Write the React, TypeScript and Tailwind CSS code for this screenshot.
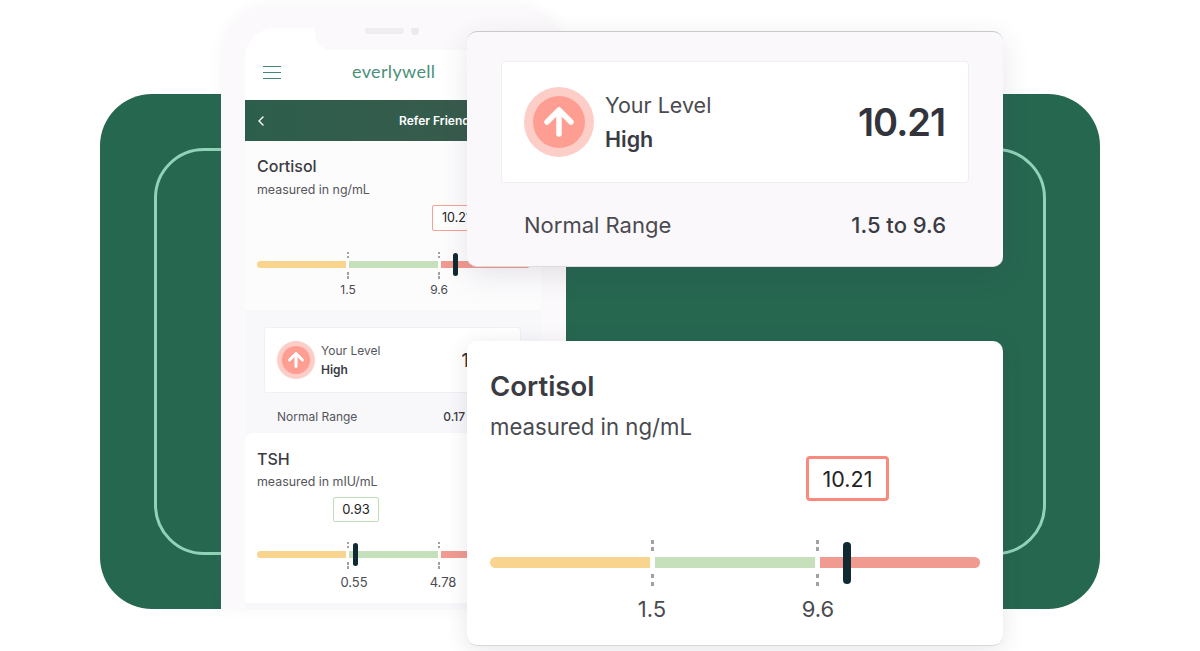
const font = { fontFamily: "Inter, 'Noto Sans', sans-serif" };

const dotsBig = "h-[4px] w-[3px] bg-[#a0a0a5]";
const dotsSmall = "h-[2.5px] w-[2px] bg-[#a0a0a5]";

const Ticks = ({ x, big }: { x: number; big?: boolean }) => {
  const dot = big ? dotsBig : dotsSmall;
  return (
    <>
      <div
        className={big ? "absolute bottom-[17px] flex flex-col gap-[3px]" : "absolute bottom-[10px] flex flex-col gap-[1.5px]"}
        style={{ left: x }}
      >
        <div className={dot} />
        <div className={dot} />
      </div>
      <div
        className={big ? "absolute top-[17px] flex flex-col gap-[4px]" : "absolute top-[11px] flex flex-col gap-[1.5px]"}
        style={{ left: x }}
      >
        <div className={dot} />
        <div className={dot} />
      </div>
    </>
  );
};

type ScaleProps = {
  big?: boolean;
  marker: number;
  low: string;
  high: string;
  lowX: number;
  highX: number;
  labelClass?: string;
};

// three coloured segments with dashed ticks, a marker and two labels
const Scale = ({ big, marker, low, high, lowX, highX, labelClass }: ScaleProps) => {
  const seg = big ? "w-[160px]" : "w-[89px]";
  const label = big
    ? "absolute top-[38px] -translate-x-1/2 text-[22px] leading-[28px] text-[#4a4a50]"
    : labelClass ?? "absolute top-[21px] -translate-x-1/2 text-[12px] leading-[16px] text-[#4a4a50]";
  return (
    <div className={big ? "relative flex gap-[5px] h-[11px]" : "relative flex gap-[3px] h-[7px]"}>
      <div className={`${seg} rounded-l-full bg-[#f8d48e]`} />
      <div className={`${seg} bg-[#c5e0bb]`} />
      <div className={`${seg} rounded-r-full bg-[#f09a90]`} />
      <Ticks x={big ? 161 : 90} big={big} />
      <Ticks x={big ? 326 : 181} big={big} />
      <div
        className={
          big
            ? "absolute top-[-15px] h-[42px] w-[8px] rounded-full bg-[#0f2a33]"
            : "absolute top-[-8px] h-[23px] w-[5px] rounded-full bg-[#0f2a33]"
        }
        style={{ left: marker }}
      />
      <span className={label} style={{ left: lowX }}>
        {low}
      </span>
      <span className={label} style={{ left: highX }}>
        {high}
      </span>
    </div>
  );
};

const UpBadge = ({ size }: { size: number }) => (
  <svg width={size} height={size} viewBox="0 0 70 70" className="shrink-0">
    <circle cx="35" cy="35" r="35" fill="#fdcdc8" />
    <circle cx="35" cy="35" r="26" fill="#fe9e93" />
    <path
      d="M35 47V24M23 35l12-12 12 12"
      fill="none"
      stroke="#fff"
      strokeWidth="5.5"
      strokeLinecap="round"
      strokeLinejoin="round"
    />
  </svg>
);

export default function App() {
  return (
    <div className="relative h-[651px] w-[1200px] overflow-hidden bg-white" style={font}>
      {/* green panel with ring */}
      <div className="ml-[100px] mt-[94px] h-[515px] w-[1000px] rounded-[52px] bg-[#266750] pl-[54px] pt-[54px]">
        <div className="h-[407px] w-[892px] rounded-[50px] border-[3px] border-[#8fd3b8]" />
      </div>

      {/* phone */}
      <div className="absolute left-[221px] top-[5px] h-[604px] w-[345px] rounded-t-[52px] bg-[#fbf9fb] pl-[24px] pr-[25px] pt-[23px] shadow-[0_0_14px_rgba(120,110,130,0.06)]">
        <div className="relative h-[581px] w-[296px] overflow-hidden rounded-t-[30px] bg-[#f8f7fa]">
          {/* notch */}
          <div className="absolute left-[70px] top-0 h-[22px] w-[226px] rounded-bl-[16px] bg-[#fbf9fb]" />
          <div className="absolute left-[120px] top-[0px] h-[6px] w-[39px] rounded-full bg-[#efedf0]" />
          <div className="absolute left-[166px] top-[-1px] h-[8px] w-[8px] rounded-full bg-[#eceaed]" />

          <div className="flex h-[72px] items-end bg-white pb-[13px] pl-[18px]">
            <div className="flex w-[18px] flex-col gap-[4.5px] pb-[8px]">
              <div className="h-[1.5px] bg-[#3f8a70]" />
              <div className="h-[1.5px] bg-[#3f8a70]" />
              <div className="h-[1.5px] bg-[#3f8a70]" />
            </div>
            <span
              className="mb-[3px] ml-[71px] text-[18px] leading-[26px] tracking-[0.35px] text-[#4a9079]"
              style={{ fontFamily: "Lato, sans-serif" }}
            >
              everlywell
            </span>
          </div>

          <div className="flex h-[41px] items-center bg-gradient-to-r from-[#2d5e4c] to-[#3a5a4c] pl-[13px]">
            <svg width="6" height="10" viewBox="0 0 6 10">
              <path d="M5 1L1 5l4 4" fill="none" stroke="#fff" strokeWidth="1.4" strokeLinecap="round" />
            </svg>
            <span className="ml-[135px] whitespace-nowrap text-[12px] font-semibold text-white">Refer Friend</span>
          </div>

          <div className="h-[169px] bg-[#fdfcfd] pl-[12px] pt-[15px]">
            <div className="text-[16px] font-medium leading-[20px] text-[#3b3b43]">Cortisol</div>
            <div className="mt-[5px] text-[12.4px] leading-[18px] text-[#55555b]">measured in ng/mL</div>
            <div className="ml-[175px] mt-[6px] flex h-[26px] w-[60px] items-center rounded-[2px] border-[1.5px] border-[#f9a095] bg-white pl-[9px] text-[12.5px] text-[#222]">
              10.21
            </div>
            <div className="mt-[30px]">
              <Scale marker={196} low="1.5" high="9.6" lowX={91} highX={182} />
            </div>
          </div>

          <div className="h-[123px] pl-[19px] pt-[17px]">
            <div className="flex h-[66px] w-[257px] items-center rounded-[3px] border border-[#f1eff3] bg-white pl-[12px]">
              <UpBadge size={38} />
              <div className="ml-[6px] flex flex-col gap-[3px] text-[12px] leading-[16px]">
                <span className="text-[#55555b]">Your Level</span>
                <span className="font-semibold text-[#3b3b43]">High</span>
              </div>
              <span className="ml-[81px] text-[18px] font-medium text-[#33333b]">1</span>
            </div>
            <div className="mt-[16px] flex pl-[13px] text-[12px] leading-[16px]">
              <span className="text-[#55555b]">Normal Range</span>
              <span className="ml-[86px] font-medium text-[#3b3b43]">0.17</span>
            </div>
          </div>

          <div className="h-[170px] rounded-tl-[8px] bg-white pl-[12px] pt-[16px]">
            <div className="text-[16px] font-medium leading-[20px] text-[#3b3b43]">TSH</div>
            <div className="mt-[4px] text-[12.4px] leading-[18px] text-[#55555b]">measured in mIU/mL</div>
            <div className="ml-[76px] mt-[6px] flex h-[25px] w-[46px] items-center justify-center rounded-[2px] border-[1.5px] border-[#bfe0b5] bg-white text-[13px] text-[#222]">
              0.93
            </div>
            <div className="mt-[29px]">
              <Scale
                marker={96}
                low="0.55"
                high="4.78"
                lowX={97}
                highX={186}
                labelClass="absolute top-[23px] -translate-x-1/2 text-[13px] leading-[16px] text-[#4a4a50]"
              />
            </div>
          </div>
        </div>
      </div>

      {/* level card */}
      <div className="absolute left-[467px] top-[31px] h-[236px] w-[536px] rounded-[10px] border-y border-t-[#c9c9cc] border-b-[#dcdcdf] bg-[#faf8fb] pl-[34px] pt-[29px] shadow-[0_8px_28px_rgba(60,50,70,0.12)]">
        <div className="flex h-[122px] w-[468px] items-center rounded-[4px] border border-[#f0eef2] bg-white pl-[22px]">
          <UpBadge size={70} />
          <div className="ml-[11px] flex flex-col gap-[6px] text-[21.5px] leading-[28px]">
            <span className="text-[#4a4a50]">Your Level</span>
            <span className="font-semibold text-[#3b3b43]">High</span>
          </div>
          <span className="ml-auto mr-[23px] text-[38px] font-semibold tracking-[-1px] text-[#33333b]">10.21</span>
        </div>
        <div className="mt-[28px] flex w-[445px] justify-between pl-[23px] text-[22px] leading-[28px]">
          <span className="text-[#4a4a50]">Normal Range</span>
          <span className="font-medium text-[#3b3b43]">1.5 to 9.6</span>
        </div>
      </div>

      {/* cortisol card */}
      <div className="absolute left-[467px] top-[341px] h-[305px] w-[536px] rounded-[10px] border-b border-[#d8d8da] bg-white pl-[23px] pt-[27px] shadow-[0_4px_22px_rgba(60,50,70,0.12)]">
        <div className="text-[27.5px] font-semibold leading-[36px] text-[#3b3b43]">Cortisol</div>
        <div className="mt-[8px] text-[22.2px] leading-[30px] text-[#4a4a50]">measured in ng/mL</div>
        <div className="ml-[316px] mt-[14px] flex h-[45px] w-[83px] items-center justify-center rounded-[4px] border-[3px] border-[#fa8a7e] pt-[1px] text-[21.5px] text-[#222]">
          10.21
        </div>
        <div className="mt-[56px]">
          <Scale big marker={353} low="1.5" high="9.6" lowX={162} highX={328} />
        </div>
      </div>
    </div>
  );
}
